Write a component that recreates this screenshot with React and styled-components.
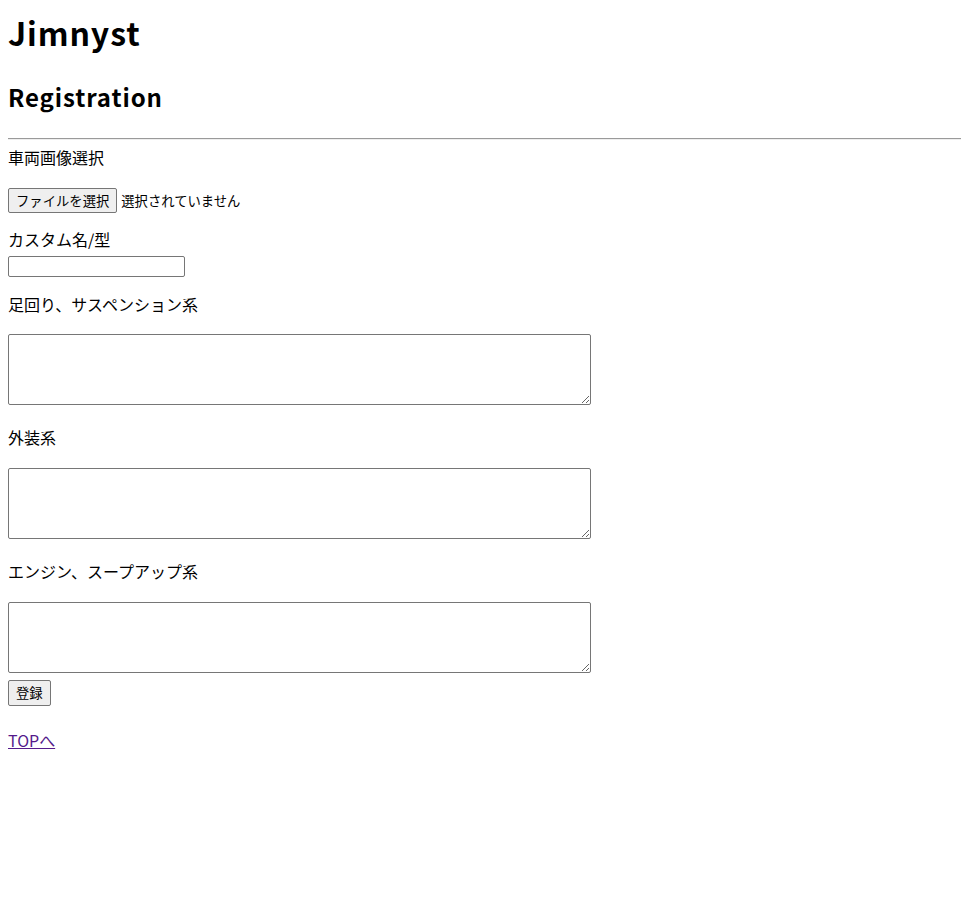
import React from "react";
import styled, { createGlobalStyle } from "styled-components";

const GlobalStyle = createGlobalStyle`
  html, body {
    margin: 0;
    padding: 0;
    background: #ffffff;
  }
  body {
    font-family: "Noto Sans CJK JP", "Noto Sans", sans-serif;
    color: #000000;
    font-size: 16px;
  }
`;

const Page = styled.div`
  display: flex;
  flex-direction: column;
  align-items: flex-start;
  padding: 0 0 0 8px;
`;

const Title = styled.h1`
  margin: 12px 0 0;
  font-size: 32px;
  line-height: 40px;
  font-weight: 700;
  letter-spacing: 0.9px;
`;

const Subtitle = styled.h2`
  margin: 29px 0 0;
  font-size: 24px;
  line-height: 32px;
  font-weight: 700;
  letter-spacing: 0.9px;
`;

const Rule = styled.hr`
  align-self: stretch;
  margin: 25px 0 0;
  height: 0;
  border: none;
  border-top: 1px solid #9a9a9a;
  border-bottom: 1px solid #eeeeee;
`;

const Label = styled.p`
  margin: ${(p) => p.$mt}px 0 0;
  font-size: 16px;
  line-height: 24px;
`;

const FileRow = styled.div`
  margin-top: 19px;
  display: flex;
  align-items: center;
  gap: 4px;
  font-size: 13.33px;
`;

const Button = styled.button`
  margin: ${(p) => p.$mt || 0}px 0 0;
  height: ${(p) => p.$h || 25}px;
  padding: 0 7px;
  font-family: "Noto Sans CJK JP", "Noto Sans", sans-serif;
  font-size: 13.33px;
  line-height: 1;
  color: #000000;
  background: #efefef;
  border: 1px solid #767676;
  border-radius: 2px;
`;

const FileStatus = styled.span`
  font-size: 13.33px;
  line-height: 25px;
`;

const TextInput = styled.input`
  margin-top: 5px;
  box-sizing: border-box;
  width: 177px;
  height: 21px;
  padding: 1px 2px;
  border: 1px solid #767676;
  border-radius: 2px;
  font-family: "Noto Sans CJK JP", "Noto Sans", sans-serif;
  font-size: 13.33px;
`;

const TextArea = styled.textarea`
  display: block;
  margin-top: ${(p) => p.$mt}px;
  box-sizing: border-box;
  width: 583px;
  height: 71px;
  padding: 2px;
  border: 1px solid #767676;
  border-radius: 2px;
  font-family: "Liberation Mono", monospace;
  font-size: 13.33px;
`;

const TopLink = styled.a`
  margin-top: 22px;
  font-size: 16px;
  line-height: 24px;
  color: #551a8b;
  text-decoration: underline;
`;

export default function App() {
  return (
    <>
      <GlobalStyle />
      <Page>
        <Title>Jimnyst</Title>
        <Subtitle>Registration</Subtitle>
        <Rule />
        <Label $mt={5}>車両画像選択</Label>
        <FileRow>
          <Button type="button">ファイルを選択</Button>
          <FileStatus>選択されていません</FileStatus>
        </FileRow>
        <Label $mt={14}>カスタム名/型</Label>
        <TextInput type="text" />
        <Label $mt={15}>足回り、サスペンション系</Label>
        <TextArea $mt={18} />
        <Label $mt={20}>外装系</Label>
        <TextArea $mt={19} />
        <Label $mt={20}>エンジン、スープアップ系</Label>
        <TextArea $mt={19} />
        <Button type="submit" $mt={7} $h={26}>登録</Button>
        <TopLink href="#top">TOPへ</TopLink>
      </Page>
    </>
  );
}
